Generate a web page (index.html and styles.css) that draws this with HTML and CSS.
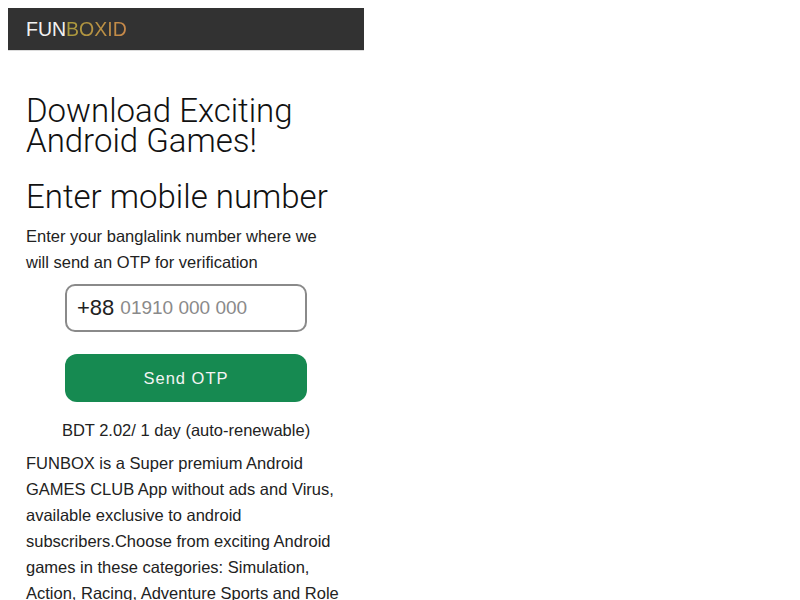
FILE: index.html
```html
<!DOCTYPE html>
<html lang="en">
<head>
<meta charset="utf-8">
<title>FUNBOXID</title>
<link rel="stylesheet" href="styles.css">
</head>
<body>
<div class="page">
  <header class="topbar">
    <span class="logo"><span class="logo-fun">FUN</span><span class="logo-box">BOXID</span></span>
  </header>
  <main class="content">
    <h1 class="title">Download Exciting Android Games!</h1>
    <h2 class="subtitle">Enter mobile number</h2>
    <p class="lead">Enter your banglalink number where we will send an OTP for verification</p>
    <form class="otp-form">
      <label class="phone-field">
        <span class="prefix">+88</span>
        <input class="phone-input" type="tel" placeholder="01910 000 000">
      </label>
      <button class="send-btn" type="button">Send OTP</button>
    </form>
    <p class="price">BDT 2.02/ 1 day (auto-renewable)</p>
    <p class="desc">FUNBOX is a Super premium Android GAMES CLUB App without ads and Virus, available exclusive to android subscribers.Choose from exciting Android games in these categories: Simulation, Action, Racing, Adventure Sports and Role Playing games.</p>
  </main>
</div>
</body>
</html>
```
FILE: styles.css
```css
html, body {
  margin: 0;
  padding: 0;
  background: #ffffff;
}
body {
  padding: 8px;
  font-family: "Liberation Sans", Arial, sans-serif;
  color: #1a1a1a;
}
.page {
  width: 356px;
}
.topbar {
  height: 42px;
  background: #323232;
  border-bottom: 1px solid #dcdcdc;
  display: flex;
  align-items: center;
  padding-left: 18px;
}
.logo {
  font-size: 19.5px;
}
.logo-fun {
  color: #f2f2f2;
}
.logo-box {
  background: linear-gradient(90deg, #a99c3c, #c8884a);
  -webkit-background-clip: text;
  background-clip: text;
  color: transparent;
}
.content {
  padding: 45px 23px 0 18px;
}
.title {
  margin: 0;
  font-family: Roboto, "Liberation Sans", sans-serif;
  font-size: 33px;
  font-weight: 300;
  line-height: 30px;
  color: #111;
}
.subtitle {
  margin: 21px 0 0 0;
  font-family: Roboto, "Liberation Sans", sans-serif;
  font-size: 33px;
  font-weight: 300;
  line-height: 40px;
  color: #111;
  white-space: nowrap;
}
.lead {
  margin: 6px 0 0 0;
  font-size: 16.5px;
  line-height: 26px;
  color: #222;
}
.otp-form {
  margin: 9px -5px 0 0;
  display: flex;
  flex-direction: column;
  align-items: center;
  gap: 22px;
}
.phone-field {
  box-sizing: border-box;
  width: 242px;
  height: 48px;
  border: 2px solid #8a8a8a;
  border-radius: 10px;
  display: flex;
  align-items: center;
  padding-left: 10px;
  gap: 6px;
}
.prefix {
  font-size: 22px;
  color: #222;
}
.phone-input {
  border: none;
  outline: none;
  width: 150px;
  font-family: inherit;
  font-size: 19px;
  color: #333;
  padding: 0;
  background: transparent;
}
.phone-input::placeholder {
  color: #8a8a8a;
}
.send-btn {
  width: 242px;
  height: 48px;
  border: none;
  border-radius: 12px;
  background: #168a51;
  color: #f4f4f4;
  font-family: inherit;
  font-size: 16.5px;
  letter-spacing: 1px;
}
.price {
  margin: 15px -5px 0 0;
  text-align: center;
  font-size: 16.5px;
  line-height: 26px;
  color: #222;
}
.desc {
  margin: 7px 0 0 0;
  font-size: 16.5px;
  line-height: 26px;
  color: #222;
}
```
